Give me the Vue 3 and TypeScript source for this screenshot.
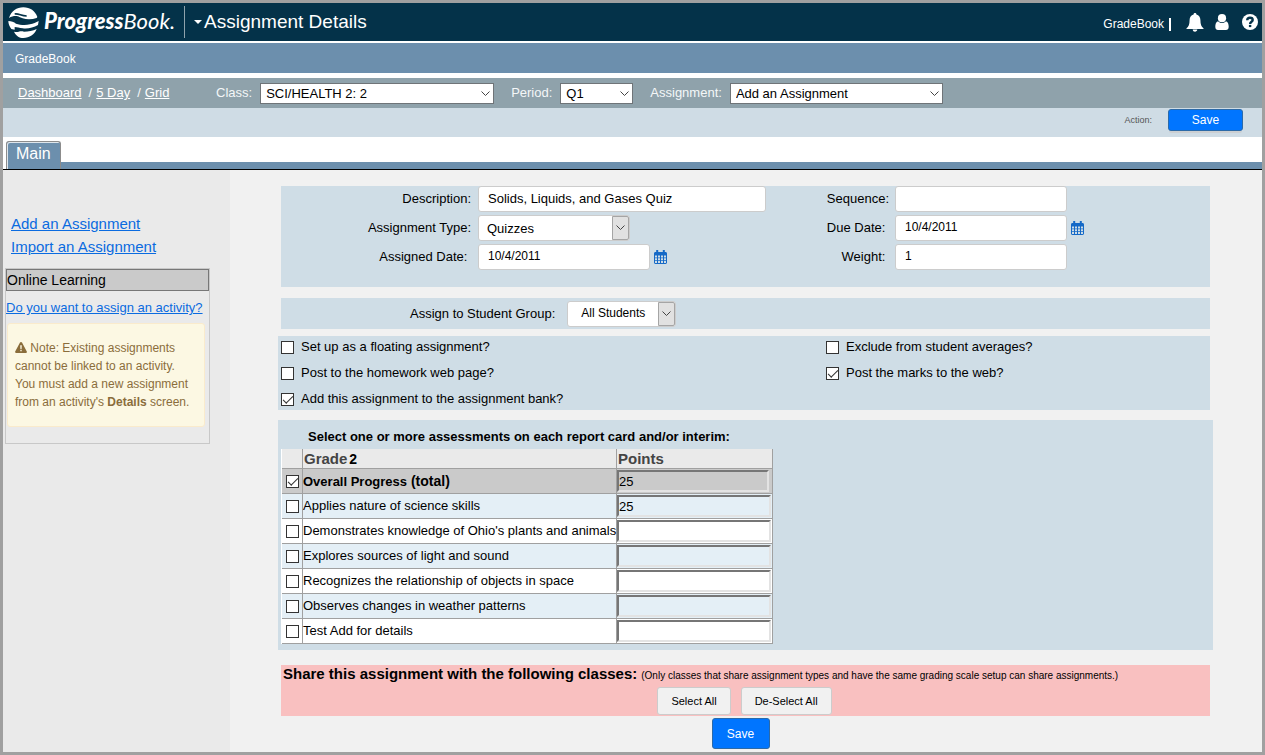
<script setup lang="ts">
import { reactive, ref } from 'vue'

interface Assessment {
  name: string
  suffix?: string
  points: string
  checked: boolean
  total?: boolean
}

interface Option {
  id: string
  label: string
  checked: boolean
}

const classes: string[] = ['SCI/HEALTH 2: 2']
const periods: string[] = ['Q1']
const assignments: string[] = ['Add an Assignment']
const types: string[] = ['Quizzes']
const groups: string[] = ['All Students']

const selectedClass = ref(classes[0])
const selectedPeriod = ref(periods[0])
const selectedAssignment = ref(assignments[0])

const form = reactive({
  description: 'Solids, Liquids, and Gases Quiz',
  type: types[0],
  assigned: '10/4/2011',
  sequence: '',
  due: '10/4/2011',
  weight: '1',
  group: groups[0],
})

const leftOptions = reactive<Option[]>([
  { id: 'floating', label: 'Set up as a floating assignment?', checked: false },
  { id: 'homework', label: 'Post to the homework web page?', checked: false },
  { id: 'bank', label: 'Add this assignment to the assignment bank?', checked: true },
])

const rightOptions = reactive<Option[]>([
  { id: 'exclude', label: 'Exclude from student averages?', checked: false },
  { id: 'marks', label: 'Post the marks to the web?', checked: true },
])

const assessments = reactive<Assessment[]>([
  { name: 'Overall Progress', suffix: '(total)', points: '25', checked: true, total: true },
  { name: 'Applies nature of science skills', points: '25', checked: false },
  { name: "Demonstrates knowledge of Ohio's plants and animals", points: '', checked: false },
  { name: 'Explores sources of light and sound', points: '', checked: false },
  { name: 'Recognizes the relationship of objects in space', points: '', checked: false },
  { name: 'Observes changes in weather patterns', points: '', checked: false },
  { name: 'Test Add for details', points: '', checked: false },
])
</script>

<template>
  <div class="app">
    <header class="top">
      <a class="brand" href="#" aria-label="ProgressBook">
        <svg class="mark" viewBox="0 0 93 93" aria-hidden="true">
          <path fill="#fff" d="M3 33C10 12 26 1 46 1c20 0 36 11 42 29l-2 3c-14 5-30 5-42 1l-10-4C28 26 14 26 3 33z" />
          <path fill="none" stroke="#043249" stroke-width="5" d="M20 21c14-2 18 6 36 6" />
          <path
            fill="#fff"
            d="M1 42c9 0 17 3 23 8 12 4 28 6 42 2 10-2 18-6 26-10l-2 12c-14 8-30 12-46 10-10-1-16-4-24-4v8l-10-2C4 58 1 50 1 42z"
          />
          <path fill="#fff" d="M18 74c12 4 16-4 30 0 14 0 26-2 38-8-6 16-22 27-40 27-12 0-22-7-28-19z" />
        </svg>
        <span class="wordmark"><b>Progress</b>Book.</span>
      </a>
      <h1 class="title"><span class="caret"></span>Assignment Details</h1>
      <div class="tools">
        <a class="tool-link" href="#">GradeBook</a>
        <span class="bar"></span>
        <button class="icon-btn bell" type="button" aria-label="Notifications">
          <svg width="18" height="19" viewBox="0 0 18 19">
            <path
              fill="#fff"
              d="M9 0c.9 0 1.400.6 1.400 1.400C13 2 14.400 4.200 14.400 7c0 4.500 1 6.800 3.100 8.200v.8H.5v-.8C2.600 13.800 3.600 11.500 3.600 7c0-2.800 1.400-5 4-5.600C7.600.6 8.100 0 9 0zM6.700 16.600h4.600C11.200 18 10.200 18.800 9 18.800S6.800 18 6.700 16.600z"
            />
          </svg>
        </button>
        <button class="icon-btn user" type="button" aria-label="Account">
          <svg width="14" height="16" viewBox="0 0 14 16">
            <circle cx="7" cy="4.200" r="4.100" fill="#fff" />
            <path fill="#fff" d="M3 7.200C1 7.800.3 10 .3 12.800.3 15 1.500 16 3 16h8c1.500 0 2.700-1 2.700-3.200 0-2.800-.7-5-2.700-5.600C10 8.400 8.500 9 7 9S4 8.400 3 7.200z" />
          </svg>
        </button>
        <button class="icon-btn" type="button" aria-label="Help">
          <svg width="16" height="16" viewBox="0 0 16 16">
            <circle cx="8" cy="8" r="8" fill="#fff" />
            <path fill="none" stroke="#043249" stroke-width="2.400" d="M5.200 6.300C5.300 4.600 6.400 3.800 8 3.800s2.700.9 2.700 2.200C10.700 7.900 8.100 7.700 8.100 10" />
            <path fill="#043249" d="M6.900 10.900h2.400v2.200H6.900z" />
          </svg>
        </button>
      </div>
    </header>

    <nav class="product"><a href="#">GradeBook</a></nav>

    <div class="crumbs">
      <nav class="trail">
        <a href="#">Dashboard</a><span class="slash">/</span><a href="#">5 Day</a><span class="slash">/</span><a href="#">Grid</a>
      </nav>
      <div class="pick">
        <label for="class">Class:</label>
        <span class="flat class-box">
          <select id="class" v-model="selectedClass"><option v-for="c in classes" :key="c">{{ c }}</option></select>
          <svg class="chev" viewBox="0 0 9 6"><path d="M.5 .5l4 4 4-4" /></svg>
        </span>
      </div>
      <div class="pick">
        <label for="period">Period:</label>
        <span class="flat period-box">
          <select id="period" v-model="selectedPeriod"><option v-for="p in periods" :key="p">{{ p }}</option></select>
          <svg class="chev" viewBox="0 0 9 6"><path d="M.5 .5l4 4 4-4" /></svg>
        </span>
      </div>
      <div class="pick">
        <label for="assignment">Assignment:</label>
        <span class="flat assignment-box">
          <select id="assignment" v-model="selectedAssignment"><option v-for="a in assignments" :key="a">{{ a }}</option></select>
          <svg class="chev" viewBox="0 0 9 6"><path d="M.5 .5l4 4 4-4" /></svg>
        </span>
      </div>
    </div>

    <div class="action">
      <span>Action:</span>
      <button class="save small" type="button">Save</button>
    </div>

    <div class="tabs"><button class="tab" type="button">Main</button></div>

    <div class="body">
      <aside class="side">
        <div class="links">
          <a href="#">Add an Assignment</a>
          <a href="#">Import an Assignment</a>
        </div>
        <section class="online">
          <h2>Online Learning</h2>
          <a class="activity" href="#">Do you want to assign an activity?</a>
          <p class="note">
            <svg width="12" height="11" viewBox="0 0 12 11" aria-hidden="true">
              <path fill="#8a6d3b" d="M6 0c.5 0 .8.3 1 .6l4.800 8.900c.4.700 0 1.500-.8 1.500H1c-.8 0-1.200-.8-.8-1.500L5 .6C5.200.3 5.500 0 6 0z" />
              <path fill="#fcf8e3" d="M5.200 3.300h1.600l-.2 3.600H5.400zM5.300 7.800h1.400v1.400H5.300z" />
            </svg>
            Note: Existing assignments<br />cannot be linked to an activity.<br />You must add a new assignment<br />from an activity's
            <b>Details</b> screen.
          </p>
        </section>
      </aside>

      <main class="main">
        <section class="panel details">
          <div class="fields left">
            <label for="desc">Description:</label>
            <input id="desc" v-model="form.description" class="text wide" type="text" />
            <label for="type">Assignment Type:</label>
            <span class="boxed type-box">
              <select id="type" v-model="form.type"><option v-for="t in types" :key="t">{{ t }}</option></select>
              <span class="arrow"><svg class="chev" viewBox="0 0 9 6"><path d="M.5 .5l4 4 4-4" /></svg></span>
            </span>
            <label for="assigned">Assigned Date:&nbsp;</label>
            <div class="date">
              <input id="assigned" v-model="form.assigned" class="text" type="text" />
              <button class="cal" type="button" aria-label="Choose assigned date">
                <svg width="13" height="14" viewBox="0 0 13 14">
                  <path fill="#1569c7" d="M0 3.500C0 2.700.6 2 1.400 2h10.200c.8 0 1.400.7 1.400 1.500V12.600c0 .8-.6 1.400-1.400 1.400H1.400C.6 14 0 13.400 0 12.600zM2.200 0h2v3h-2zM8.800 0h2v3h-2z" />
                  <path fill="#cfdde6" d="M1 5.500h2v2H1zM4 5.500h2v2H4zM7 5.500h2v2H7zM10 5.500h2v2h-2zM1 8.300h2v2H1zM4 8.300h2v2H4zM7 8.300h2v2H7zM10 8.300h2v2h-2zM1 11.100h2v2H1zM4 11.100h2v2H4zM7 11.100h2v2H7zM10 11.100h2v2h-2z" />
                </svg>
              </button>
            </div>
          </div>
          <div class="fields right">
            <label for="seq">Sequence:</label>
            <input id="seq" v-model="form.sequence" class="text" type="text" />
            <label for="due">Due Date:&nbsp;</label>
            <div class="date">
              <input id="due" v-model="form.due" class="text" type="text" />
              <button class="cal" type="button" aria-label="Choose due date">
                <svg width="13" height="14" viewBox="0 0 13 14">
                  <path fill="#1569c7" d="M0 3.500C0 2.700.6 2 1.400 2h10.200c.8 0 1.400.7 1.400 1.500V12.600c0 .8-.6 1.400-1.400 1.400H1.400C.6 14 0 13.400 0 12.600zM2.200 0h2v3h-2zM8.800 0h2v3h-2z" />
                  <path fill="#cfdde6" d="M1 5.500h2v2H1zM4 5.500h2v2H4zM7 5.500h2v2H7zM10 5.500h2v2h-2zM1 8.300h2v2H1zM4 8.300h2v2H4zM7 8.300h2v2H7zM10 8.300h2v2h-2zM1 11.100h2v2H1zM4 11.100h2v2H4zM7 11.100h2v2H7zM10 11.100h2v2h-2z" />
                </svg>
              </button>
            </div>
            <label for="weight">Weight:&nbsp;</label>
            <input id="weight" v-model="form.weight" class="text" type="text" />
          </div>
        </section>

        <section class="panel group">
          <label for="group">Assign to Student Group:</label>
          <span class="boxed group-box">
            <select id="group" v-model="form.group"><option v-for="g in groups" :key="g">{{ g }}</option></select>
            <span class="arrow"><svg class="chev" viewBox="0 0 9 6"><path d="M.5 .5l4 4 4-4" /></svg></span>
          </span>
        </section>

        <section class="panel options">
          <div class="option-col">
            <label v-for="o in leftOptions" :key="o.id" class="option"><input v-model="o.checked" class="check" type="checkbox" />{{ o.label }}</label>
          </div>
          <div class="option-col">
            <label v-for="o in rightOptions" :key="o.id" class="option"><input v-model="o.checked" class="check" type="checkbox" />{{ o.label }}</label>
          </div>
        </section>

        <section class="panel assess">
          <h2>Select one or more assessments on each report card and/or interim:</h2>
          <table>
            <thead>
              <tr>
                <th class="c-check"></th>
                <th class="c-name">Grade<span class="grade-no">2</span></th>
                <th class="c-points">Points</th>
              </tr>
            </thead>
            <tbody>
              <tr v-for="(a, i) in assessments" :key="a.name" :class="{ total: a.total, alt: i % 2 === 1 }">
                <td><input :id="`as-${i}`" v-model="a.checked" class="check" type="checkbox" /></td>
                <td>
                  <label :for="`as-${i}`">{{ a.name }}<b v-if="a.suffix">&nbsp;{{ a.suffix }}</b></label>
                </td>
                <td><input v-model="a.points" class="points" type="text" :aria-label="`Points for ${a.name}`" /></td>
              </tr>
            </tbody>
          </table>
        </section>

        <section class="share">
          <div class="share-head">
            <h2>Share this assignment with the following classes:</h2>
            <small>(Only classes that share assignment types and have the same grading scale setup can share assignments.)</small>
          </div>
          <div class="share-buttons">
            <button type="button">Select All</button>
            <button type="button">De-Select All</button>
          </div>
        </section>
        <div class="bottom"><button class="save" type="button">Save</button></div>
      </main>
    </div>
  </div>
</template>

<style>
body {
  margin: 0;
}
</style>

<style scoped>
.app,
.app * {
  box-sizing: border-box;
}
.app {
  display: flex;
  flex-direction: column;
  min-height: 100vh;
  border: 3px solid #a0a0a0;
  background: #fff;
  color: #000;
  font: 13px/16px 'Liberation Sans', Arial, sans-serif;
}
button,
input,
select {
  font-family: inherit;
  color: inherit;
}
h1,
h2,
p {
  margin: 0;
}
svg {
  display: block;
}

/* Header */
.top {
  display: flex;
  align-items: center;
  height: 38px;
  background: #043249;
  color: #fff;
}
.brand {
  display: flex;
  align-items: center;
  height: 32px;
  padding: 0 9px 0 5px;
  border-right: 1px solid #8fa3ad;
  color: #fff;
  text-decoration: none;
}
.mark {
  width: 31px;
  height: 31px;
}
.wordmark {
  padding-left: 5px;
  font: italic 22px/30px Lato, sans-serif;
  padding-bottom: 2px;
}
.wordmark b {
  font-weight: 900;
}
.title {
  display: flex;
  align-items: center;
  margin-left: 9px;
  font-size: 19px;
  line-height: 24px;
  font-weight: 400;
}
.caret {
  margin-right: 2px;
  border: 4px solid transparent;
  border-top-color: #fff;
  border-bottom: 0;
}
.tools {
  display: flex;
  align-items: center;
  margin-left: auto;
  padding-right: 4px;
}
.tool-link,
.product a {
  color: #fff;
  font-size: 12px;
  text-decoration: none;
}
.tool-link {
  padding-top: 3px;
}
.bar {
  width: 2px;
  height: 13px;
  margin: 4px 15px 0 5px;
  background: #fff;
}
.icon-btn {
  padding: 0;
  border: 0;
  background: none;
}
.bell {
  margin-right: 11px;
}
.user {
  margin-right: 13px;
}

.product {
  height: 30px;
  margin-top: 2px;
  padding: 8px 12px;
  background: #6c8fad;
}
.crumbs {
  display: flex;
  align-items: center;
  height: 30px;
  margin-top: 5px;
  padding-left: 15px;
  background: #8fa2ab;
  color: #f4f7f8;
}
.trail {
  width: 198px;
}
.trail a {
  color: #fff;
}
.slash {
  margin: 0 4px 0 7px;
}
.pick {
  display: flex;
  align-items: center;
  gap: 8px;
  margin-right: 17px;
}
.flat {
  position: relative;
  height: 21px;
}
.flat select {
  width: 100%;
  height: 21px;
  padding: 0 20px 0 5px;
  border: 1px solid #6f7478;
  border-radius: 0;
  background: #fff;
  color: #000;
  font-size: 13px;
  appearance: none;
}
.class-box {
  width: 234px;
}
.period-box {
  width: 73px;
}
.assignment-box {
  width: 213px;
}
.chev {
  width: 9px;
  height: 6px;
  fill: none;
  stroke: #444;
  stroke-width: 1;
}
.flat .chev {
  position: absolute;
  top: 8px;
  right: 4px;
  pointer-events: none;
}

.action {
  display: flex;
  justify-content: flex-end;
  align-items: flex-start;
  gap: 16px;
  height: 29px;
  padding: 1px 19px 0 0;
  background: #cfdce5;
  color: #555;
  font-size: 9px;
  line-height: 22px;
}
.save {
  width: 58px;
  height: 31px;
  padding: 0;
  border: 1px solid #2c6aa8;
  border-radius: 3px;
  background: #0075ff;
  color: #fff;
  font-size: 12px;
}
.save.small {
  width: 75px;
  height: 22px;
  box-shadow: 0 3px 0 -1px #cccfd2;
}

.tabs {
  display: flex;
  align-items: flex-end;
  height: 33px;
  padding: 4px 0 0 3px;
  border-bottom: 1px solid #000;
  background: linear-gradient(#6c8fad, #6c8fad) 3px 25px no-repeat #fff;
}
.tab {
  align-self: flex-start;
  height: 28px;
  padding: 0 9px 4px;
  border: 1px solid #8c8c8c;
  border-width: 1px 1px 0 1px;
  border-radius: 3px 3px 0 0;
  background: #6c8fad;
  box-shadow: inset 1px 1px 0 #dfe6ec;
  color: #fff;
  font-size: 16px;
}

/* Body */
.body {
  display: flex;
  flex: 1;
  background: #f1f1f1;
}
.side {
  flex: 0 0 227px;
  padding: 42px 20px 0 2px;
  background: #eaeaea;
}
.side a {
  color: #0a6be0;
}
.links {
  display: flex;
  flex-direction: column;
  align-items: flex-start;
  padding-left: 6px;
  font-size: 15px;
  line-height: 23px;
}
.online {
  height: 176px;
  margin-top: 10px;
  border: 1px solid #c8c8c8;
}
.online h2 {
  height: 22px;
  border: 1px solid #777;
  background: #cacaca;
  font-size: 14px;
  line-height: 20px;
  font-weight: 400;
}
.activity {
  display: block;
  margin-top: 9px;
  white-space: nowrap;
}
.note {
  margin: 7px 4px 0 1px;
  padding: 15px 7px;
  border: 1px solid #faebcc;
  border-radius: 3px;
  background: #fcf8e3;
  color: #8a6d3b;
  font-size: 12px;
  line-height: 18px;
  white-space: nowrap;
}
.note svg {
  display: inline-block;
  vertical-align: -1px;
}

.main {
  flex: 1;
  padding: 16px 49px 3px 48px;
}
.panel {
  background: #cfdde6;
}
.details {
  display: grid;
  grid-template-columns: 545px 1fr;
  margin-right: 3px;
  margin-left: 3px;
  height: 101px;
}
.fields {
  display: grid;
  grid-template-rows: repeat(3, 26px);
  row-gap: 3px;
  align-items: center;
}
.left {
  grid-template-columns: 197px 1fr;
}
.right {
  grid-template-columns: 69px 1fr;
}
.fields > label {
  padding-right: 7px;
  text-align: right;
  white-space: nowrap;
}
.right > label {
  padding-right: 6px;
}
.text {
  width: 172px;
  height: 26px;
  padding: 0 9px 2px;
  border: 1px solid #ccc;
  border-radius: 3px;
  background: #fff;
  font-size: 12px;
}
.wide {
  width: 288px;
  font-size: 13px;
}
.date {
  display: flex;
  align-items: center;
  gap: 4px;
}
.cal {
  padding: 0;
  border: 0;
  background: none;
}
.boxed {
  display: flex;
  height: 26px;
  border: 1px solid #ccc;
  border-radius: 3px;
  background: #fff;
}
.boxed select {
  flex: 1;
  min-width: 0;
  padding: 0 0 0 8px;
  border: 0;
  background: none;
  font-size: 13px;
  appearance: none;
}
.type-box {
  width: 152px;
}
.group-box {
  width: 109px;
}
.group-box select {
  padding: 0 0 2px 13px;
  font-size: 12px;
}
.arrow {
  display: flex;
  justify-content: center;
  align-items: center;
  width: 17px;
  border: 1px solid #a5a5a5;
  border-radius: 0 2px 2px 0;
  background: #e1e1e1;
}
.group {
  display: flex;
  align-items: center;
  height: 31px;
  margin: 11px 3px 0;
  padding-left: 129px;
  gap: 12px;
}
.options {
  display: grid;
  grid-template-columns: 545px 1fr;
  margin: 7px 3px 0 0;
  padding-left: 3px;
}
.option-col {
  display: flex;
  flex-direction: column;
  gap: 4px;
}
.option {
  display: flex;
  align-items: center;
  height: 22px;
  gap: 7px;
}
.check {
  position: relative;
  flex: none;
  width: 13px;
  height: 13px;
  margin: 0;
  border: 1px solid #333;
  background: #fff;
  appearance: none;
}
.check:checked::after {
  content: '';
  position: absolute;
  top: 2px;
  left: 1px;
  width: 9px;
  height: 4px;
  border: solid #333;
  border-width: 0 0 1px 1px;
  transform: rotate(-45deg);
}

.assess {
  margin-top: 10px;
  padding: 9px 0 6px 3px;
}
.assess h2 {
  padding: 0 0 4px 27px;
  font-size: 13px;
  line-height: 16px;
}
table {
  width: 492px;
  border-spacing: 0;
  table-layout: fixed;
  border-left: 1px solid #fff;
}
.c-check {
  width: 21px;
}
.c-points {
  width: 156px;
}
th,
td {
  padding: 0;
  border: solid #a0a0a0;
  border-width: 0 1px 1px 0;
  text-align: left;
  white-space: nowrap;
}
th {
  height: 20px;
  padding: 0 0 0 1px;
  background: #eaeaea;
  color: #444;
  font-size: 15px;
  line-height: 18px;
}
.grade-no {
  padding-left: 2px;
  color: #000;
  font-size: 14px;
  line-height: 14px;
}
td {
  height: 25px;
  background: #fff;
}
td .check {
  display: block;
  margin-left: 4px;
}
.alt td {
  background: #e4eff6;
}
.total td {
  background: #cacaca;
  font-weight: 700;
}
.total b {
  font-size: 14px;
}
.points {
  display: block;
  width: 154px;
  height: 22px;
  padding: 0;
  border: 2px solid #767676;
  border-right-color: #e3e3e3;
  border-bottom-color: #e3e3e3;
  background: transparent;
  font-size: 13px;
}
.total .points {
  width: 152px;
  font-weight: 400;
}

.share {
  margin: 15px 3px 0;
  padding: 0 80px 2px 2px;
  height: 51px;
  background: #f9c0c0;
}
.share-head {
  display: flex;
  align-items: baseline;
  gap: 4px;
  white-space: nowrap;
}
.share-head h2 {
  font-size: 15px;
  line-height: 18px;
}
.share-head small {
  font-size: 10px;
}
.share-buttons {
  display: flex;
  justify-content: center;
  gap: 10px;
  padding: 3px 0 0 76px;
}
.share-buttons button {
  height: 28px;
  padding: 0 13px;
  border: 1px solid #ccc;
  border-radius: 3px;
  background: #f1f1f1;
  font-size: 11px;
}
.bottom {
  display: flex;
  justify-content: center;
  padding: 2px 10px 0 0;
}
</style>
